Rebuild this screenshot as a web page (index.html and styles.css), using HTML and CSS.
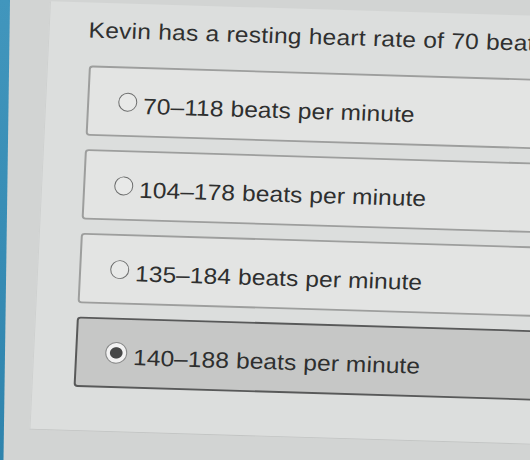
FILE: index.html
```html
<!DOCTYPE html>
<html lang="en">
<head>
<meta charset="utf-8">
<title>Heart rate question</title>
<link rel="stylesheet" href="styles.css">
</head>
<body>
  <div class="edge"></div>
  <div class="stage">
    <div class="panel">
      <p class="question">Kevin has a resting heart rate of 70 beats per minute. What is his target heart rate zone?</p>
      <div class="options">
        <label class="option"><span class="radio"></span><span class="label">70–118 beats per minute</span></label>
        <label class="option"><span class="radio"></span><span class="label">104–178 beats per minute</span></label>
        <label class="option"><span class="radio"></span><span class="label">135–184 beats per minute</span></label>
        <label class="option selected"><span class="radio"></span><span class="label">140–188 beats per minute</span></label>
      </div>
    </div>
  </div>
</body>
</html>
```
FILE: styles.css
```css
html, body {
  margin: 0;
  padding: 0;
}
body {
  width: 530px;
  height: 460px;
  overflow: hidden;
  display: flex;
  background: #d2d4d3;
  font-family: "Liberation Sans", Arial, sans-serif;
}
.edge {
  flex: none;
  width: 10px;
  background: linear-gradient(#4196bd, #2f84ad);
  clip-path: polygon(0 0, 100% 0, 35% 100%, 0 100%);
}
.stage {
  flex: none;
  width: 600px;
  transform: matrix(1, 0.03, -0.0432, 0.9, 0, 0);
  transform-origin: 0 0;
}
.panel {
  margin-left: 40px;
  height: 476px;
  box-sizing: border-box;
  padding: 17px 0 0 41px;
  background: #dcdedd;
  border-left: 1px solid #cfd1d0;
  border-bottom: 1px solid #c2c4c3;
}
.question {
  margin: 0 0 0 -2px;
  font-size: 24.5px;
  line-height: 28px;
  letter-spacing: 0.25px;
  color: #2f3030;
  white-space: nowrap;
}
.options {
  margin-top: 25px;
  display: flex;
  flex-direction: column;
  gap: 15px;
  width: 560px;
}
.option {
  height: 78px;
  box-sizing: border-box;
  display: flex;
  align-items: center;
  gap: 6px;
  padding-left: 29px;
  background: #e3e4e3;
  border: 2px solid #9d9e9d;
  border-radius: 4px;
}
.radio {
  flex: none;
  width: 19px;
  height: 21px;
  box-sizing: border-box;
  border-radius: 50%;
  border: 1.5px solid #6c6d6d;
  background: #e8e9e8;
}
.label {
  margin-top: 9px;
  font-size: 24.5px;
  letter-spacing: 0.1px;
  color: #2e2f2f;
  white-space: nowrap;
}
.option.selected {
  background: #c6c7c6;
  border-color: #585959;
  padding-left: 28px;
}
.option.selected .radio {
  width: 22px;
  height: 24px;
  border: 1.5px solid #8a8b8b;
  background: radial-gradient(circle, #474848 0 5.8px, #f2f2f2 6.8px);
}
```
